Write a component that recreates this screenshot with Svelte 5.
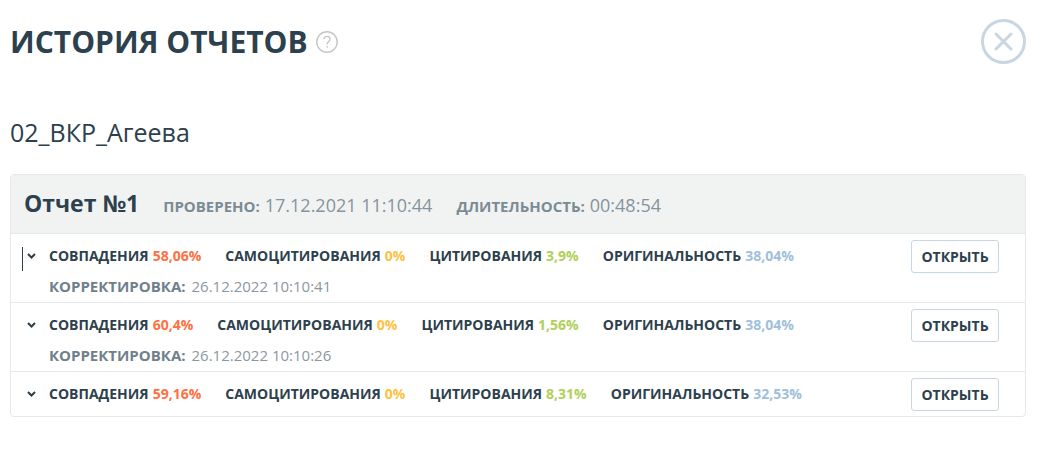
<script>
    export let title = 'История отчетов'
    export let fileName = '02_ВКР_Агеева'

    const report = {
        number: 1,
        checked: '17.12.2021 11:10:44',
        duration: '00:48:54',
    }

    let rows = [
        {matches: '58,06%', selfCites: '0%', cites: '3,9%', original: '38,04%', corrected: '26.12.2022 10:10:41'},
        {matches: '60,4%', selfCites: '0%', cites: '1,56%', original: '38,04%', corrected: '26.12.2022 10:10:26'},
        {matches: '59,16%', selfCites: '0%', cites: '8,31%', original: '32,53%', corrected: null},
    ]

    let selected = 0
</script>

<main>
    <header>
        <h1>{title}</h1>
        <button class="help" aria-label="Справка">
            <svg width="22" height="22" viewBox="0 0 22 22" fill="none" stroke="#c6c6c6" stroke-width="1.4">
                <circle cx="11" cy="11" r="10.2" />
                <path d="M8 8.2C8 6.4 9.3 5.4 11 5.4s3 1 3 2.6c0 2.3-2.9 2.6-2.9 5.4" />
                <path d="M11.1 15v1.8" />
            </svg>
        </button>
        <button class="close" aria-label="Закрыть">
            <svg width="45" height="45" viewBox="0 0 45 45" fill="none" stroke="#c8d6e2" stroke-width="3" stroke-linecap="round">
                <circle cx="22.5" cy="22.5" r="21" />
                <path d="M15 15l15 15M30 15l-15 15" />
            </svg>
        </button>
    </header>

    <h2>{fileName}</h2>

    <section>
        <div class="head">
            <h3>Отчет №{report.number}</h3>
            <p><b>Проверено:</b>{report.checked}</p>
            <p><b>Длительность:</b>{report.duration}</p>
        </div>
        <ul>
            {#each rows as row, index}
                <li>
                    <button
                        class="toggle"
                        class:selected={selected === index}
                        aria-label="Подробнее"
                        on:click={() => selected = index}>
                        <svg width="9" height="6" viewBox="0 0 9 6" fill="none" stroke="#2b3e4a" stroke-width="2">
                            <path d="M1 1l3.5 3.5L8 1" />
                        </svg>
                    </button>
                    <div class="info">
                        <div class="stats">
                            <span>Совпадения<b class="red">{row.matches}</b></span>
                            <span>Самоцитирования<b class="yellow">{row.selfCites}</b></span>
                            <span>Цитирования<b class="green">{row.cites}</b></span>
                            <span>Оригинальность<b class="blue">{row.original}</b></span>
                        </div>
                        {#if row.corrected}
                            <p><b>Корректировка:</b>{row.corrected}</p>
                        {/if}
                    </div>
                    <button class="open">Открыть</button>
                </li>
            {/each}
        </ul>
    </section>
</main>

<style>
    :global(body) {
        background: #fff;
    }

    main {
        padding: 19px 18px 40px 10px;
        font-family: "Open Sans", "Noto Sans", sans-serif;
        color: #2d404d;
    }

    h1, h2, h3, p, ul {
        margin: 0;
        padding: 0;
    }

    b {
        font-weight: 700;
    }

    button {
        padding: 0;
        border: 0;
        background: none;
        font-family: inherit;
        color: inherit;
        cursor: pointer;
    }

    svg {
        display: block;
    }

    header {
        display: flex;
        align-items: center;
        height: 45px;
    }

    h1 {
        font-size: 30px;
        font-weight: 700;
        text-transform: uppercase;
    }

    .help {
        margin-left: 8px;
    }

    .close {
        margin-left: auto;
    }

    h2 {
        margin-top: 50px;
        font-size: 25px;
        line-height: 36px;
        font-weight: 400;
    }

    section {
        margin-top: 24px;
        border: 1px solid #e6e8e9;
        border-radius: 4px;
    }

    .head {
        display: flex;
        align-items: baseline;
        gap: 24px;
        padding: 8px 13px 10px;
        background: #f1f3f2;
        line-height: 40px;
    }

    h3 {
        font-size: 23px;
        font-weight: 700;
    }

    .head p {
        font-size: 18px;
        line-height: 1;
        color: #86949d;
    }

    .head b {
        margin-right: 5px;
        font-size: 15px;
        text-transform: uppercase;
        color: #7b8b94;
    }

    li {
        display: flex;
        align-items: flex-start;
        padding: 6px 26px 1px 11px;
        border-top: 1px solid #e6e8e9;
    }

    .toggle {
        width: 18px;
        height: 24px;
        margin: 7px 9px 0 0;
        padding: 0 0 6px 5px;
    }

    .selected {
        border-left: 1px solid #2b3e4a;
        padding-left: 4px;
    }

    .info {
        flex: 1;
        margin-top: 1px;
        font-size: 14px;
        line-height: 30px;
    }

    .stats {
        display: flex;
        gap: 24px;
        font-weight: 700;
        text-transform: uppercase;
    }

    .stats b {
        margin-left: 4px;
    }

    .info p {
        font-size: 15px;
        color: #8a98a1;
    }

    .info p b {
        margin-right: 6px;
        text-transform: uppercase;
        color: #6f808b;
    }

    .red {
        color: #ff7043;
    }

    .yellow {
        color: #ffc043;
    }

    .green {
        color: #b0d058;
    }

    .blue {
        color: #a0c0da;
    }

    .open {
        width: 88px;
        height: 33px;
        margin-bottom: 4px;
        border: 1px solid #c8d6e2;
        border-radius: 3px;
        font-size: 14px;
        font-weight: 700;
        text-transform: uppercase;
    }
</style>
